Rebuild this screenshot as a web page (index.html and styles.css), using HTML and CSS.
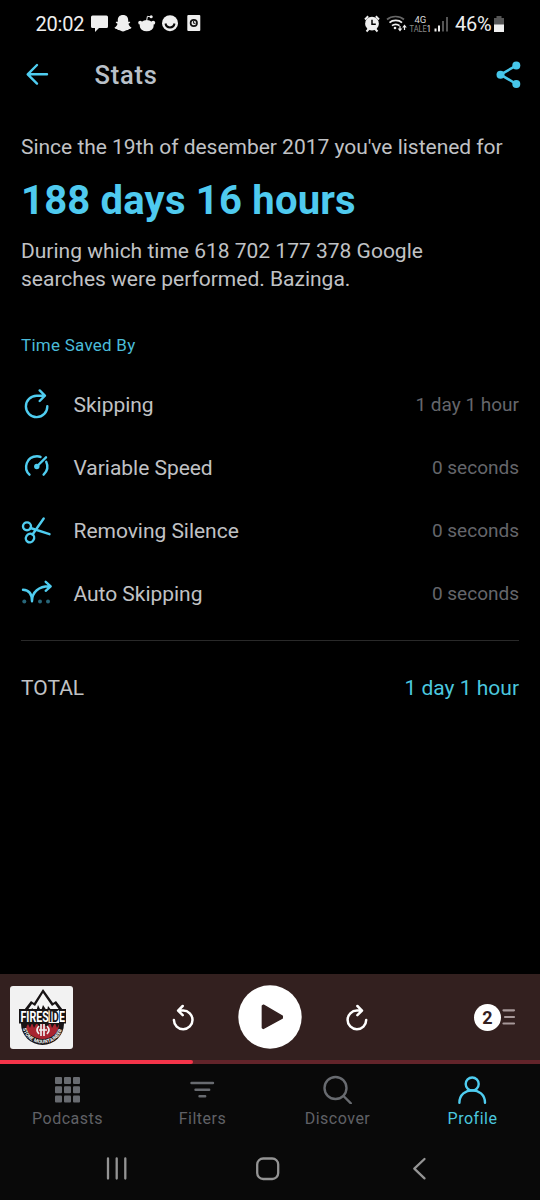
FILE: index.html
```html
<!DOCTYPE html>
<html lang="en">
<head>
<meta charset="utf-8">
<title>Stats</title>
<link rel="stylesheet" href="styles.css">
</head>
<body>
<div class="phone">
  <header class="status">
    <span class="clock">20:02</span>
    <svg class="notifications" viewBox="90 11 112 24" width="112" height="24">
      <g fill="#efefef">
        <path d="M92.500 15.500h14q1.500 0 1.500 1.500v9.500q0 1.500-1.500 1.500h-7.500l-4 4v-4h-2.500q-1.500 0-1.500-1.500v-9.500q0-1.500 1.500-1.500z"/>
        <path d="M123 15c-3.500 0-5.300 2.200-5.200 5.300v1.500l-1.800-.1c-.7.600.3 1.500 1.500 2-.3 1.900-1.600 3.200-3 3.700.3 1.200 1.600 1.400 2.700 1.600l.5 1c1.200-.2 2.200 0 3.100.7 1.500 1.100 2.900 1.100 4.400 0 .9-.7 1.900-.9 3.100-.7l.5-1c1.100-.2 2.400-.4 2.700-1.600-1.400-.5-2.700-1.800-3-3.700 1.200-.5 2.200-1.400 1.500-2l-1.800.1v-1.500C128.300 17.200 126.500 15 123 15z"/>
        <ellipse cx="146.700" cy="25.700" rx="7" ry="5.600"/>
        <circle cx="140.200" cy="22.700" r="2"/><circle cx="153.200" cy="22.700" r="2"/><circle cx="151.200" cy="16.800" r="1.500"/>
        <circle cx="170" cy="23.200" r="8"/>
        <rect x="187.300" y="15" width="13" height="16" rx="1"/>
      </g>
      <path d="M146.700 20.500l.7-4.200 3.600.6" fill="none" stroke="#efefef"/>
      <path d="M165.500 23.500c.8 5.200 8.200 5.200 9 0" fill="none" stroke="#080808" stroke-width="2"/>
      <circle cx="193.800" cy="23" r="3.200" fill="none" stroke="#111" stroke-width="1.700"/>
      <path d="M193.600 21v2.300h1.900" fill="none" stroke="#111"/>
    </svg>
    <svg class="signals" viewBox="362 9 90 28" width="90" height="28">
      <circle cx="372" cy="22.700" r="6.900" fill="#eee"/>
      <path d="M365 18.500l3.200-3.300M379 18.500l-3.200-3.300M366.500 30.500l2.500-2.700M377.500 30.500l-2.500-2.700" stroke="#eee" stroke-width="2"/>
      <path d="M372 18.700v4.500h3.800" fill="none" stroke="#000" stroke-width="1.500"/>
      <path d="M387 18.500c4.500-4 12.500-4 17 0" fill="none" stroke="#666" stroke-width="1.700"/>
      <path d="M389.500 21.700c3.200-3 9.300-3 12.500 0M392 24.700c2-1.800 5.400-1.800 7.500 0" fill="none" stroke="#eee" stroke-width="1.700"/>
      <circle cx="395" cy="27" r="1.300" fill="#eee"/>
      <path d="M400 25v4M404.500 29v-4" stroke="#eee" stroke-width="1.200"/>
      <path d="M397.700 27.500h4.600l-2.300 3zM402.200 26.500h4.600l-2.300-3z" fill="#eee"/>
      <text x="420.300" y="22" class="network">4G</text>
      <text x="409.500" y="31" class="carrier" textLength="21.500" lengthAdjust="spacingAndGlyphs">TALE<tspan class="sim">1</tspan></text>
      <path d="M435.500 27.500v3M439 24.500v6" stroke="#eee" stroke-width="2"/>
      <path d="M443 20v10.500M447 16v14.500" stroke="#555" stroke-width="2"/>
    </svg>
    <span class="percent">46%</span>
    <svg class="battery" viewBox="0 0 12 18" width="12" height="18">
      <path d="M3.500 1h5v2H11v7H1V3h2.500z" fill="#555"/><path d="M1 9.500h10V17H1z" fill="#f0f0f0"/>
    </svg>
  </header>

  <div class="appbar">
    <svg class="accent-line" viewBox="25 62 24 26" width="24" height="26"><path d="M47 74.300H28M37 65l-9.300 9.300 9.300 9.300"/></svg>
    <h1 class="title">Stats</h1>
    <svg viewBox="494 59 28 30" width="28" height="30">
      <path d="M516.300 64.500L500.500 73.700l15.800 9.300" fill="none" stroke="#46c6e9" stroke-width="2.600"/>
      <g fill="#46c6e9"><circle cx="516.300" cy="64.600" r="4"/><circle cx="500.500" cy="73.700" r="4"/><circle cx="516.300" cy="83" r="4"/></g>
    </svg>
  </div>

  <main class="content">
    <p class="lead">Since the 19th of desember 2017 you've listened for</p>
    <p class="listened">188 days 16 hours</p>
    <p class="fact">During which time 618 702 177 378 Google<br>searches were performed. Bazinga.</p>
    <h2 class="section">Time Saved By</h2>
    <ul class="rows">
      <li class="row">
        <svg class="accent-line" viewBox="21 389 32 32" width="32" height="32"><path d="M47.300 406.200A10.700 10.700 0 1 1 36.600 395.700h8M39.700 390.400l5.200 5.300-5.200 5.300"/></svg>
        <span class="name">Skipping</span><span class="value">1 day 1 hour</span>
      </li>
      <li class="row">
        <svg class="accent-line" viewBox="21 452 32 32" width="32" height="32"><path d="M29.500 474.700C22.800 468.300 26.500 456.200 37 456.200q2 0 3.500.7M46.200 461.800q3.400 7.200-2.600 12.900M36.800 466.500l9.200-9.200"/><circle cx="36.800" cy="466.500" r="2.700" fill="#4fcdf0" stroke="none"/></svg>
        <span class="name">Variable Speed</span><span class="value">0 seconds</span>
      </li>
      <li class="row">
        <svg class="accent-line" viewBox="21 515 32 32" width="32" height="32"><ellipse cx="27" cy="526.300" rx="4" ry="3.900"/><ellipse cx="30" cy="538" rx="4" ry="4.500" transform="rotate(30 30 538)"/><path d="M30.500 528l19 6.200M32.500 534.500l11.200-16"/></svg>
        <span class="name">Removing Silence</span><span class="value">0 seconds</span>
      </li>
      <li class="row">
        <svg class="accent-line" viewBox="21 578 32 32" width="32" height="32"><path d="M23 589.800c6 .2 9 4.500 9 11.500 0-9.500 7-15 17-15M45.700 581.800l5 4.500-5 4.500"/><g fill="#286679" stroke="none"><circle cx="24.300" cy="601.500" r="2"/><circle cx="40" cy="601.500" r="2"/><circle cx="48" cy="601.500" r="2"/></g></svg>
        <span class="name">Auto Skipping</span><span class="value">0 seconds</span>
      </li>
    </ul>
    <div class="total"><span>TOTAL</span><span class="total-value">1 day 1 hour</span></div>
  </main>

  <section class="player">
    <div class="controls">
      <svg class="artwork" viewBox="0 0 63 63" width="63" height="63">
        <circle cx="32.500" cy="37.500" r="21.500" fill="#181415"/>
        <path d="M11 28L21 15l3 2 9-14 10 14 3-2 10 13z" fill="#181415"/>
        <path d="M17 25l5-7 3 2 8-13 9 13 3-2 5 7-4-1-4 1-4-5-1 5-4-6-2 6-3-6-2 7-4-4-1 3z" fill="#f5f5f5"/>
        <path d="M16 38h33q0 7-5 11-11 8-23 0-5-4-5-11z" fill="#a82530"/>
        <path d="M15 43l3-5 2 4 2-5 2 5 3-6 2 6 4-6 4 6 3-6 2 6 3-5 2 5 3-6V35H15z" fill="#181415"/>
        <path d="M9 23h47v14.500H9z" fill="#181415"/>
        <path d="M38.500 24l3 1.500h5l2.500-1.500v13H38.500z" fill="#f5f5f5"/>
        <text x="10.500" y="35.700" class="art-title" textLength="44.500" lengthAdjust="spacingAndGlyphs">FIRES<tspan class="art-dark">ID</tspan>E</text>
        <path d="M29 40q-4 4 0 8M37 40q4 4 0 8M29 44h8M31 38v12M34 38v12" fill="none" stroke="#eee" stroke-width="1.700"/>
        <path id="art-curve" d="M13.500 41C17 61.500 48 61.500 51.500 41" fill="none"/>
        <text class="art-subtitle"><textPath href="#art-curve" startOffset="1" textLength="50" lengthAdjust="spacingAndGlyphs">STONE MOUNTAINEER</textPath></text>
      </svg>
      <svg class="player-icon back" viewBox="170 1002 28 32" width="28" height="32"><path d="M173.900 1020A9.300 9.300 0 1 0 183.200 1010.600h-5M182.700 1006l-4.600 4.600 4.600 4.600"/></svg>
      <svg class="play" viewBox="238 985 64 64" width="64" height="64"><circle cx="270" cy="1017" r="31.700" fill="#fff"/><path d="M263.500 1005.200l18.800 11-.1 2-18.800 10.200-1-.6v-22z" fill="#33201f" stroke="#33201f" stroke-width="1.500" stroke-linejoin="round"/></svg>
      <svg class="player-icon forward" viewBox="343 1002 28 32" width="28" height="32"><path d="M366.200 1020A9.300 9.300 0 1 1 356.900 1010.600h5M357.400 1006l4.600 4.600-4.600 4.600"/></svg>
      <div class="queue">
        <span class="count">2</span>
        <svg viewBox="0 0 14 18" width="14" height="18"><path d="M1.500 2.300H12M3 9h9M1.500 15.500H12" stroke="#a79899" stroke-width="2.200" stroke-linecap="round"/></svg>
      </div>
    </div>
    <div class="progress"><div class="played"></div></div>
  </section>

  <nav class="tabs">
    <a class="tab">
      <svg viewBox="53 1074 30 30" width="30" height="30"><g fill="#686b70"><rect x="55" y="1077" width="7" height="7" rx="1"/><rect x="64" y="1077" width="7" height="7" rx="1"/><rect x="73" y="1077" width="7" height="7" rx="1"/><rect x="55" y="1086.300" width="7" height="7" rx="1"/><rect x="64" y="1086.300" width="7" height="7" rx="1"/><rect x="73" y="1086.300" width="7" height="7" rx="1"/><rect x="55" y="1095.500" width="7" height="7" rx="1"/><rect x="64" y="1095.500" width="7" height="7" rx="1"/><rect x="73" y="1095.500" width="7" height="7" rx="1"/></g></svg>
      <span>Podcasts</span>
    </a>
    <a class="tab">
      <svg class="tab-line" viewBox="188 1074 30 30" width="30" height="30"><path d="M191.500 1083h21.500M195.500 1089.700h13.700M199.500 1096.300h5.700"/></svg>
      <span>Filters</span>
    </a>
    <a class="tab">
      <svg class="tab-line" viewBox="323 1074 30 30" width="30" height="30"><circle cx="335.500" cy="1088" r="11"/><path d="M343.500 1096l7.300 7.300"/></svg>
      <span>Discover</span>
    </a>
    <a class="tab active">
      <svg class="tab-line" viewBox="458 1074 30 30" width="30" height="30"><circle cx="472.200" cy="1084" r="6.500"/><path d="M459.400 1102.700c0-16.500 25.600-16.500 25.600 0"/></svg>
      <span>Profile</span>
    </a>
  </nav>

  <nav class="system">
    <svg viewBox="104 1156 26 26" width="26" height="26"><path d="M108 1158.500v20M116.700 1158.500v20M125.300 1158.500v20"/></svg>
    <svg viewBox="255 1156 26 26" width="26" height="26"><rect x="257.200" y="1158.500" width="21" height="20.500" rx="6"/></svg>
    <svg viewBox="406 1156 26 26" width="26" height="26"><path d="M424.500 1159l-10.200 9.700 10.200 9.700"/></svg>
  </nav>
</div>
</body>
</html>
```
FILE: styles.css
```css
* { box-sizing: border-box; }

body {
  margin: 0;
  background: #000;
  color: #c0c2c5;
  font-family: Roboto, sans-serif;
}

h1, h2, p, ul { margin: 0; padding: 0; font-weight: 400; }

svg { display: block; flex: none; }

.phone {
  display: flex;
  flex-direction: column;
  width: 540px;
  height: 1200px;
  overflow: hidden;
}

.status {
  display: flex;
  align-items: center;
  height: 47px;
  padding: 0 34px 0 35px;
  color: #eee;
}

.clock, .percent { font-size: 20px; line-height: 24px; white-space: nowrap; }
.clock { width: 55px; letter-spacing: -0.2px; text-indent: 0.5px; }
.notifications { margin-bottom: 1px; }
.signals { margin-left: 160px; }
.percent { width: 38px; margin-left: 3px; letter-spacing: -0.2px; }
.network { fill: #ddd; font-size: 9.500px; text-anchor: middle; }
.carrier { fill: #888; font-size: 8.500px; }
.sim { fill: #eee; }

.appbar {
  display: flex;
  align-items: center;
  height: 56px;
  padding: 0 18px 0 25px;
}

.title {
  flex: 1;
  margin-left: 45.500px;
  color: #b9c0c8;
  font-size: 25.500px;
  font-weight: 500;
  letter-spacing: 0.8px;
}

.accent-line {
  fill: none;
  stroke: #4fcdf0;
  stroke-width: 2.4;
  stroke-linecap: round;
  stroke-linejoin: round;
}

.content { flex: 1; padding: 30px 21px 0; }

.lead, .fact, .row, .total { font-size: 21px; line-height: 28px; white-space: nowrap; }
.lead { letter-spacing: -0.02px; }

.listened {
  margin-top: 15px;
  color: #4fcaef;
  font-size: 40px;
  font-weight: 700;
  line-height: 50px;
  letter-spacing: 0.2px;
}

.fact { margin-top: 11px; }

.section {
  margin-top: 42px;
  color: #4bbcd9;
  font-size: 17px;
  line-height: 20px;
  letter-spacing: 0.25px;
}

.rows { margin-top: 18px; list-style: none; }

.row { display: flex; align-items: center; height: 63px; }
.name { flex: 1; margin-left: 20.500px; letter-spacing: -0.03px; }
.value { color: #65666b; font-size: 19px; }

.total {
  display: flex;
  justify-content: space-between;
  margin-top: 15px;
  padding-top: 33px;
  border-top: 1px solid #292929;
}
.total-value { color: #4bc7df; }

.player { height: 90px; background: #33201f; }

.controls { display: flex; align-items: center; height: 86px; padding-left: 10px; }
.artwork { border-radius: 3px; background: #f2f2f2; }
.back { margin-left: 97px; }
.play { margin-left: 40px; }
.forward { margin-left: 41px; }

.player-icon {
  margin-top: 1px;
  fill: none;
  stroke: #fff;
  stroke-width: 2.5;
  stroke-linecap: round;
  stroke-linejoin: round;
}

.art-title { fill: #fff; font-size: 14.500px; font-weight: 700; }
.art-dark { fill: #181415; }
.art-subtitle { fill: #fff; font-size: 5px; font-weight: 700; dominant-baseline: middle; }

.queue { display: flex; align-items: center; gap: 1px; margin-left: 103px; }
.count {
  width: 27px;
  height: 27px;
  border-radius: 50%;
  background: #fff;
  color: #33201f;
  font-size: 18px;
  font-weight: 700;
  line-height: 27px;
  text-align: center;
}

.progress { height: 4px; background: #62242a; }
.played { width: 193px; height: 4px; border-radius: 0 2px 2px 0; background: #f43449; }

.tabs { display: flex; height: 73px; background: #090909; }
.tab {
  display: flex;
  flex: 1;
  flex-direction: column;
  align-items: center;
  gap: 5px;
  padding-top: 10px;
  color: #606166;
  font-size: 16px;
  letter-spacing: 0.5px;
  line-height: 20px;
}
.tab.active { color: #4bc7df; }
.tab-line { fill: none; stroke: #686b70; stroke-width: 2.4; stroke-linecap: round; }
.active .tab-line { stroke: #4fcdf0; }

.system {
  display: flex;
  justify-content: space-between;
  height: 63px;
  padding: 19px 108px 0 104px;
  background: #090909;
}
.system svg { fill: none; stroke: #949494; stroke-width: 2.3; stroke-linecap: round; stroke-linejoin: round; }
```
